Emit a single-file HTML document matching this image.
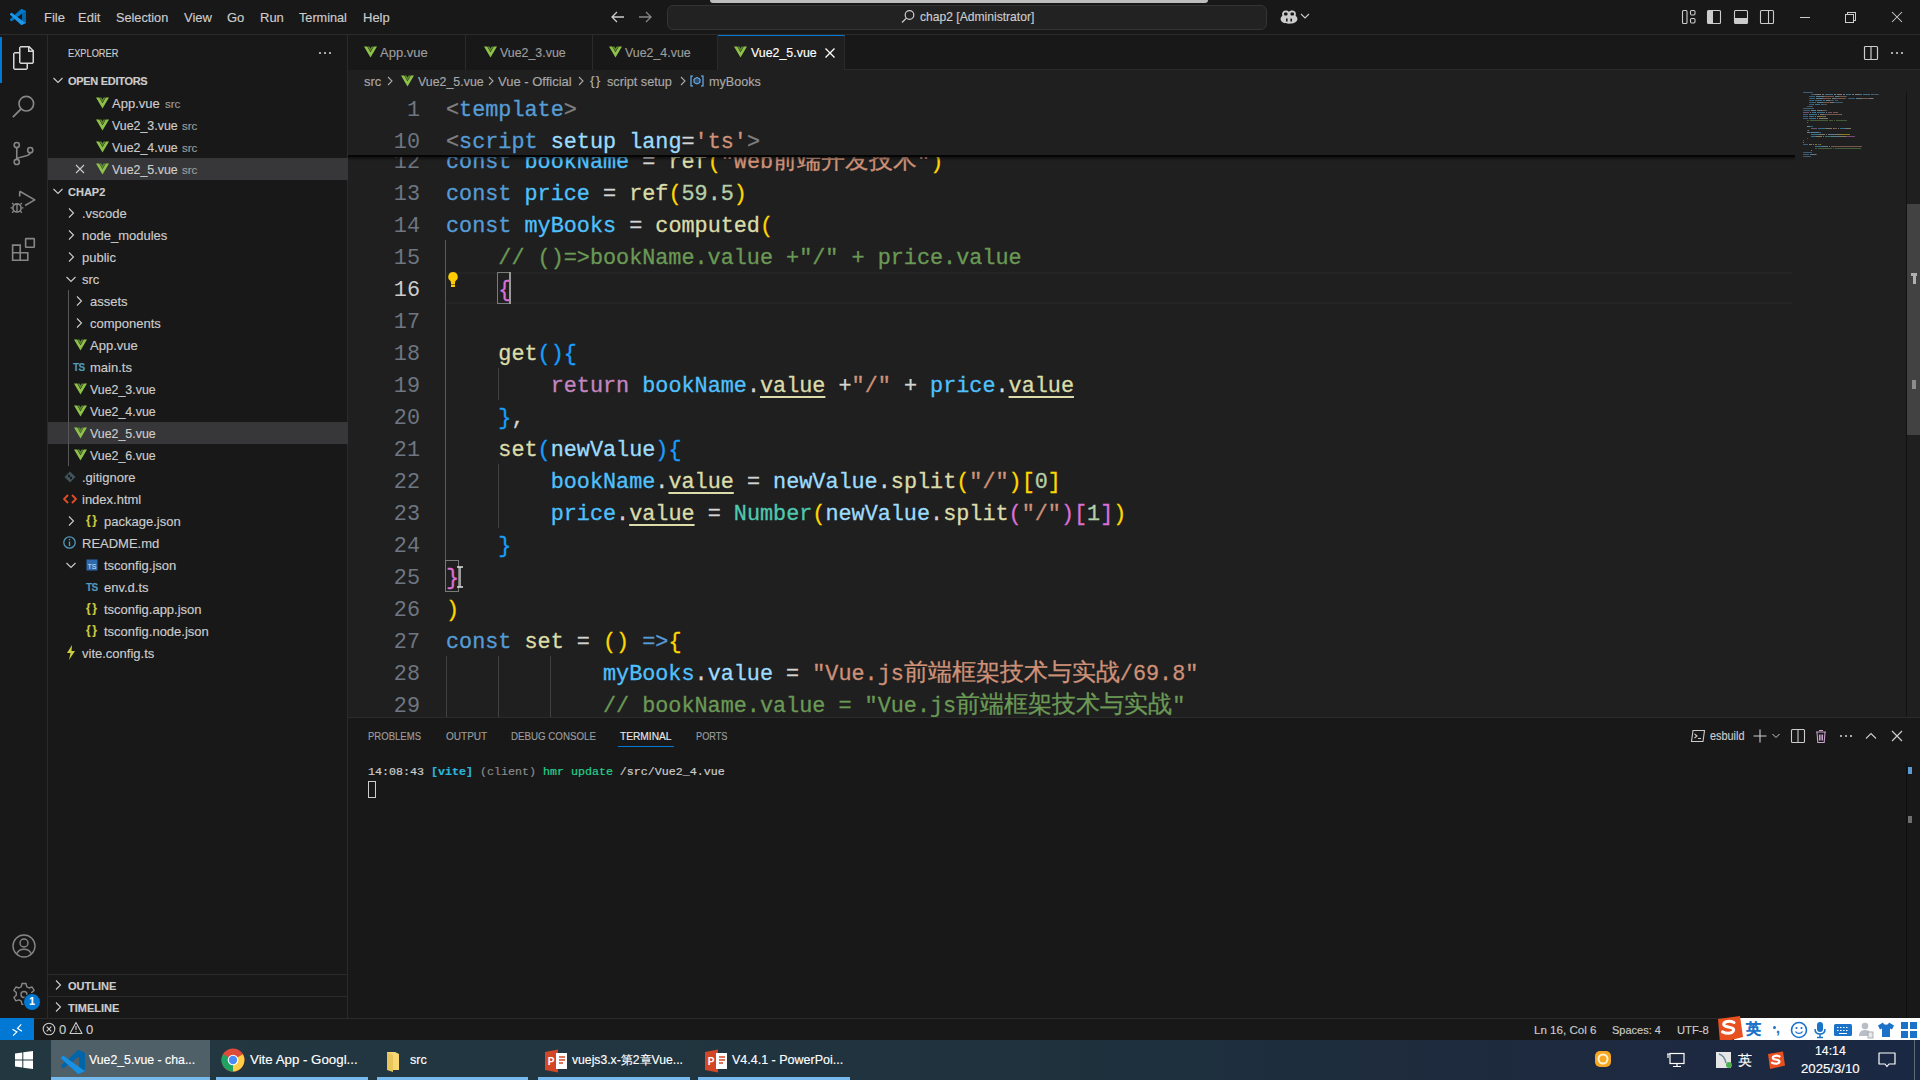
<!DOCTYPE html>
<html><head><meta charset="utf-8">
<style>
*{margin:0;padding:0;box-sizing:border-box}
html,body{width:1920px;height:1080px;overflow:hidden;background:#1f1f1f;font-family:"Liberation Sans",sans-serif;color:#cccccc}
.a{position:absolute}
.t{position:absolute;white-space:pre;font-size:13px;line-height:16px;-webkit-text-stroke:0.15px}
#title{left:0;top:0;width:1920px;height:35px;background:#181818;border-bottom:1px solid #2b2b2b}
#act{left:0;top:35px;width:48px;height:983px;background:#181818;border-right:1px solid #2b2b2b}
#side{left:48px;top:35px;width:300px;height:983px;background:#181818;border-right:1px solid #2b2b2b}
#tabs{left:348px;top:35px;width:1572px;height:35px;background:#181818;border-bottom:1px solid #2b2b2b}
#editor{left:348px;top:70px;width:1572px;height:647px;background:#1f1f1f;overflow:hidden}
#panel{left:348px;top:717px;width:1572px;height:301px;background:#181818;border-top:1px solid #2b2b2b}
#status{left:0;top:1018px;width:1920px;height:22px;background:#181818;border-top:1px solid #2b2b2b}
#taskbar{left:0;top:1040px;width:1920px;height:40px;background:linear-gradient(90deg,#223740 0%,#213640 30%,#1f313d 55%,#1d2a3e 78%,#1b2843 100%)}
.code{-webkit-text-stroke:0.3px;position:absolute;left:0;white-space:pre;font-family:"Liberation Mono",monospace;font-size:21.8px;line-height:38px;height:32px;color:#d4d4d4}
.ln{position:absolute;width:72px;text-align:right;font-family:"Liberation Mono",monospace;font-size:21.8px;line-height:38px;height:32px;color:#6e7681}
.k{color:#569cd6}.v{color:#4fc1ff}.p{color:#9cdcfe}.f{color:#dcdcaa}.n{color:#b5cea8}.s{color:#ce9178}.c{color:#6a9955}
.b1{color:#ffd700}.b2{color:#da70d6}.b3{color:#179fff}.r{color:#c586c0}.ty{color:#4ec9b0}.g{color:#808080}
.u{text-decoration:underline;text-decoration-thickness:2px;text-underline-offset:4px}
.cj{letter-spacing:0px;font-family:"Liberation Sans",sans-serif;font-size:23.8px;line-height:1px}
.row{position:absolute;left:0;width:300px;height:22px}
.row .t{top:4px}
</style></head><body>
<div id="title" class="a">
<svg class="a" style="left:10px;top:9px" width="16" height="16" viewBox="0 0 100 100"><path fill="#0065a9" d="M96.5 10.8L75.9 0.9c-2.4-1.2-5.3-0.7-7.1 1.2L29.4 38.1 12.2 25.1c-1.6-1.2-3.8-1.1-5.3 0.2L1.4 30.3c-1.8 1.7-1.8 4.5 0 6.2L16.3 50 1.4 63.5c-1.8 1.7-1.8 4.5 0 6.2l5.5 5c1.5 1.4 3.7 1.5 5.3 0.2l17.2-13L68.8 97.9c1.9 1.9 4.7 2.4 7.1 1.2l20.6-9.9c2.2-1 3.5-3.2 3.5-5.6V16.4c0-2.4-1.4-4.6-3.5-5.6zM75 72.7L45.1 50 75 27.3v45.4z"/><path fill="#007acc" d="M96.5 10.8L75.9 0.9c-2.4-1.2-5.3-0.7-7.1 1.2L1.4 63.5c-1.8 1.7-1.8 4.5 0 6.2l5.5 5c1.5 1.4 3.7 1.5 5.3 0.2L93 16.4c2.9-2.3 7 0 7 3.5v-3.5c0-2.400-1.4-4.6-3.5-5.6z" opacity=".9"/><path fill="#1f9cf0" d="M75.9 99.1c-2.4 1.2-5.3 0.7-7.1-1.2L1.4 36.5c-1.8-1.7-1.8-4.5 0-6.2l5.5-5c1.5-1.4 3.7-1.500 5.3-0.2L93 83.6c2.9 2.3 7 0.2 7-3.5v3.5c0 2.4-1.4 4.6-3.5 5.6z" opacity=".9"/></svg>
<div class="t" style="left:44px;top:10px">File</div>
<div class="t" style="left:78px;top:10px">Edit</div>
<div class="t" style="left:116px;top:10px;font-size:12.7px">Selection</div>
<div class="t" style="left:184px;top:10px">View</div>
<div class="t" style="left:227px;top:10px">Go</div>
<div class="t" style="left:260px;top:10px">Run</div>
<div class="t" style="left:299px;top:10px;font-size:12.7px">Terminal</div>
<div class="t" style="left:363px;top:10px">Help</div>
<svg class="a" style="left:609px;top:9px" width="18" height="16" viewBox="0 0 18 16"><path d="M15 8H3M8 3L3 8l5 5" stroke="#cccccc" stroke-width="1.3" fill="none"/></svg>
<svg class="a" style="left:636px;top:9px" width="18" height="16" viewBox="0 0 18 16"><path d="M3 8h12M10 3l5 5-5 5" stroke="#868686" stroke-width="1.3" fill="none"/></svg>
<div class="a" style="left:667px;top:5px;width:600px;height:25px;border-radius:6px;background:#222222;border:1px solid #343434"></div>
<div class="a" style="left:710px;top:0px;width:498px;height:3px;border-radius:0 0 4px 4px;background:#bdbdbd"></div>
<svg class="a" style="left:900px;top:9px" width="16" height="16" viewBox="0 0 16 16"><circle cx="9.5" cy="6" r="4.3" stroke="#cccccc" stroke-width="1.2" fill="none"/><path d="M6.4 9.1L2 13.5" stroke="#cccccc" stroke-width="1.3"/></svg>
<div class="t" style="left:920px;top:9px;font-size:12.1px">chap2 [Administrator]</div>
<svg class="a" style="left:1279px;top:9px" width="20" height="16" viewBox="0 0 20 16"><path d="M4 2.5c1.5-1.4 4.5-1.4 6 0.3 1.5-1.7 4.5-1.7 6-0.3 1 1 1 3 0.6 4.3 1.2 0.8 1.8 2 1.8 3.3 0 3-3.5 4.7-8.4 4.7S1.6 13.1 1.6 10.1c0-1.3 0.6-2.5 1.8-3.3C3 5.5 3 3.500 4 2.5z" fill="#cccccc"/><rect x="5" y="3.5" width="3.5" height="3" rx="1" fill="#181818"/><rect x="11.5" y="3.5" width="3.5" height="3" rx="1" fill="#181818"/><rect x="7" y="9.5" width="1.6" height="3" fill="#181818"/><rect x="11.4" y="9.5" width="1.6" height="3" fill="#181818"/></svg>
<svg class="a" style="left:1300px;top:12px" width="10" height="8" viewBox="0 0 10 8"><path d="M1 2l4 4 4-4" stroke="#cccccc" stroke-width="1.1" fill="none"/></svg>
<svg class="a" style="left:1681px;top:9px" width="16" height="16" viewBox="0 0 16 16"><rect x="1.5" y="1.5" width="4.5" height="13" rx="1" stroke="#cccccc" stroke-width="1.1" fill="none"/><rect x="9.5" y="1.5" width="4.5" height="4.5" rx="1.2" stroke="#cccccc" stroke-width="1.1" fill="none"/><rect x="9.5" y="9.5" width="4.5" height="4.5" rx="1.2" stroke="#cccccc" stroke-width="1.1" fill="none"/></svg>
<svg class="a" style="left:1706px;top:9px" width="16" height="16" viewBox="0 0 16 16"><rect x="1.5" y="1.5" width="13" height="13" rx="1" stroke="#cccccc" stroke-width="1.1" fill="none"/><rect x="2" y="2" width="5" height="12" fill="#cccccc"/></svg>
<svg class="a" style="left:1733px;top:9px" width="16" height="16" viewBox="0 0 16 16"><rect x="1.5" y="1.5" width="13" height="13" rx="1" stroke="#cccccc" stroke-width="1.1" fill="none"/><rect x="2" y="9" width="12" height="5" fill="#cccccc"/></svg>
<svg class="a" style="left:1759px;top:9px" width="16" height="16" viewBox="0 0 16 16"><rect x="1.5" y="1.5" width="13" height="13" rx="1" stroke="#cccccc" stroke-width="1.1" fill="none"/><path d="M9.5 2v12" stroke="#cccccc" stroke-width="1.1"/></svg>
<svg class="a" style="left:1797px;top:9px" width="16" height="16" viewBox="0 0 16 16" shape-rendering="crispEdges"><path d="M3 8.500h10" stroke="#cccccc" stroke-width="1"/></svg>
<svg class="a" style="left:1843px;top:9px" width="16" height="16" viewBox="0 0 16 16" shape-rendering="crispEdges"><rect x="2.5" y="5.5" width="8" height="8" stroke="#cccccc" stroke-width="1" fill="none"/><path d="M4.500 5.500V3.500h8v8h-2" stroke="#cccccc" stroke-width="1" fill="none"/></svg>
<svg class="a" style="left:1889px;top:9px" width="16" height="16" viewBox="0 0 16 16"><path d="M3 3l10 10M13 3L3 13" stroke="#d0d0d0" stroke-width="1.05"/></svg>
</div>
<div id="act" class="a">
<div class="a" style="left:0;top:2px;width:2px;height:46px;background:#0078d4"></div>
<svg class="a" style="left:12px;top:11px" width="24" height="24" viewBox="0 0 24 24"><path d="M17.5 0H8.5L7 1.5V6H2.5L1 7.5v15.07L2.5 24h12.07L16 22.57V18h4.700l1.300-1.430V4.500L17.5 0zm0 2.120l2.380 2.380H17.5V2.120zm-3 20.380h-12v-15H7v9.070L8.500 18h6v4.500zm6-6h-12v-15H16V6h4.500v10.500z" fill="#d7d7d7"/></svg>
<svg class="a" style="left:10px;top:58px" width="27" height="27" viewBox="0 0 24 24"><circle cx="14.5" cy="9.5" r="6.5" stroke="#868686" stroke-width="1.5" fill="none"/><path d="M10 14L2.5 21.5" stroke="#868686" stroke-width="1.6"/></svg>
<svg class="a" style="left:10px;top:105px" width="27" height="27" viewBox="0 0 24 24"><circle cx="6" cy="4.5" r="2.3" stroke="#868686" stroke-width="1.4" fill="none"/><circle cx="6" cy="19.5" r="2.3" stroke="#868686" stroke-width="1.4" fill="none"/><circle cx="18" cy="9" r="2.3" stroke="#868686" stroke-width="1.4" fill="none"/><path d="M6 7v10M18 11.3c0 4-12 3-12 5.9" stroke="#868686" stroke-width="1.4" fill="none"/></svg>
<svg class="a" style="left:10px;top:153px" width="28" height="28" viewBox="0 0 26 26"><path d="M9 3v5M9 3l14 8-9 5.200" stroke="#868686" stroke-width="1.5" fill="none" stroke-linejoin="round"/><circle cx="6.5" cy="18.5" r="3.8" stroke="#868686" stroke-width="1.5" fill="none"/><path d="M6.500 14.700v7.600M2 18.5h-1.500M12.5 18.5h-1.500M3.3 15.300L2 14M9.7 15.300L11 14M3.3 21.700L2 23M9.7 21.700L11 23" stroke="#868686" stroke-width="1.3"/></svg>
<svg class="a" style="left:11px;top:202px" width="26" height="26" viewBox="0 0 24 24"><path d="M1.5 7.5h7v7h7v7h-14zM8.5 14.5h-7M8.5 14.5v7" stroke="#868686" stroke-width="1.5" fill="none"/><rect x="13.5" y="1.5" width="8" height="8" rx="0.5" stroke="#868686" stroke-width="1.5" fill="none"/></svg>
<svg class="a" style="left:12px;top:899px" width="24" height="24" viewBox="0 0 24 24"><circle cx="12" cy="12" r="11" stroke="#868686" stroke-width="1.4" fill="none"/><circle cx="12" cy="9" r="4" stroke="#868686" stroke-width="1.4" fill="none"/><path d="M4.500 20c1.500-3.300 4-4.800 7.500-4.800s6 1.500 7.500 4.800" stroke="#868686" stroke-width="1.4" fill="none"/></svg>
<svg class="a" style="left:11px;top:947px" width="26" height="26" viewBox="0 0 26 26"><path d="M11 1.500h4l.7 3.200 2.300 1.300 3.100-1 2 3.400-2.400 2.200v2.700l2.400 2.200-2 3.400-3.100-1-2.300 1.300-.7 3.200h-4l-.7-3.200-2.300-1.300-3.100 1-2-3.400 2.400-2.200v-2.700L2.900 8.400l2-3.400 3.100 1 2.300-1.300z" stroke="#868686" stroke-width="1.4" fill="none" stroke-linejoin="round"/><circle cx="13" cy="12.500" r="3" stroke="#868686" stroke-width="1.4" fill="none"/></svg>
<div class="a" style="left:23px;top:958px;width:18px;height:18px;border-radius:9px;background:#0078d4;border:1.5px solid #181818"></div>
<div class="t" style="left:23px;top:959px;width:18px;text-align:center;font-size:10px;font-weight:bold;color:#fff">1</div>
</div>
<div id="side" class="a">
<div class="t" style="left:20px;top:10px;font-size:11px;transform-origin:0 0;transform:scaleX(0.84)">EXPLORER</div>
<svg class="a" style="left:269px;top:10px" width="16" height="16" viewBox="0 0 16 16"><circle cx="3" cy="8" r="1.1" fill="#cccccc"/><circle cx="8" cy="8" r="1.1" fill="#cccccc"/><circle cx="13" cy="8" r="1.1" fill="#cccccc"/></svg>
<div class="row" style="top:34px;"><svg class="a" style="left:4px;top:5px" width="12" height="12" viewBox="0 0 12 12"><path d="M1.5 4L6 8.500 10.500 4" stroke="#cccccc" stroke-width="1.1" fill="none"/></svg><div class="t" style="left:20px;color:#cccccc;font-size:11px;font-weight:bold;letter-spacing:-0.3px">OPEN EDITORS</div></div>
<div class="row" style="top:57px;"><svg class="a" style="left:48px;top:5px" width="13" height="12" viewBox="0 0 13 12"><path d="M0 0.5h3.2L6.5 6.2 9.8 0.5H13L6.5 11.5z" fill="#8dc149"/><path d="M3.6 0.5h1.8L6.5 2.5 7.6 0.5h1.8L6.5 5.6z" fill="#5f8a2e"/></svg><div class="t" style="left:64px;color:#cccccc;font-size:13px;">App.vue</div><div class="t" style="left:117px;color:#9d9d9d;font-size:11.5px;top:4px">src</div></div>
<div class="row" style="top:79px;"><svg class="a" style="left:48px;top:5px" width="13" height="12" viewBox="0 0 13 12"><path d="M0 0.5h3.2L6.5 6.2 9.8 0.5H13L6.5 11.5z" fill="#8dc149"/><path d="M3.6 0.5h1.8L6.5 2.5 7.6 0.5h1.8L6.5 5.6z" fill="#5f8a2e"/></svg><div class="t" style="left:64px;color:#cccccc;font-size:13px;font-size:12.4px">Vue2_3.vue</div><div class="t" style="left:134px;color:#9d9d9d;font-size:11.5px;top:4px">src</div></div>
<div class="row" style="top:101px;"><svg class="a" style="left:48px;top:5px" width="13" height="12" viewBox="0 0 13 12"><path d="M0 0.5h3.2L6.5 6.2 9.8 0.5H13L6.5 11.5z" fill="#8dc149"/><path d="M3.6 0.5h1.8L6.5 2.5 7.6 0.5h1.8L6.5 5.6z" fill="#5f8a2e"/></svg><div class="t" style="left:64px;color:#cccccc;font-size:13px;font-size:12.4px">Vue2_4.vue</div><div class="t" style="left:134px;color:#9d9d9d;font-size:11.5px;top:4px">src</div></div>
<div class="row" style="top:123px;background:#37373a;"><svg class="a" style="left:48px;top:5px" width="13" height="12" viewBox="0 0 13 12"><path d="M0 0.5h3.2L6.5 6.2 9.8 0.5H13L6.5 11.5z" fill="#8dc149"/><path d="M3.6 0.5h1.8L6.5 2.5 7.6 0.5h1.8L6.5 5.6z" fill="#5f8a2e"/></svg><svg class="a" style="left:26px;top:5px" width="12" height="12" viewBox="0 0 12 12"><path d="M2 2l8 8M10 2L2 10" stroke="#cccccc" stroke-width="1.1"/></svg><div class="t" style="left:64px;color:#cccccc;font-size:13px;font-size:12.4px">Vue2_5.vue</div><div class="t" style="left:134px;color:#9d9d9d;font-size:11.5px;top:4px">src</div></div>
<div class="row" style="top:145px;"><svg class="a" style="left:4px;top:5px" width="12" height="12" viewBox="0 0 12 12"><path d="M1.5 4L6 8.500 10.500 4" stroke="#cccccc" stroke-width="1.1" fill="none"/></svg><div class="t" style="left:20px;color:#cccccc;font-size:11px;font-weight:bold;">CHAP2</div></div>
<div class="row" style="top:167px;"><svg class="a" style="left:17px;top:5px" width="12" height="12" viewBox="0 0 12 12"><path d="M4 1.5L8.500 6 4 10.500" stroke="#cccccc" stroke-width="1.1" fill="none"/></svg><div class="t" style="left:34px;color:#cccccc;font-size:13px;">.vscode</div></div>
<div class="row" style="top:189px;"><svg class="a" style="left:17px;top:5px" width="12" height="12" viewBox="0 0 12 12"><path d="M4 1.5L8.500 6 4 10.500" stroke="#cccccc" stroke-width="1.1" fill="none"/></svg><div class="t" style="left:34px;color:#cccccc;font-size:13px;">node_modules</div></div>
<div class="row" style="top:211px;"><svg class="a" style="left:17px;top:5px" width="12" height="12" viewBox="0 0 12 12"><path d="M4 1.5L8.500 6 4 10.500" stroke="#cccccc" stroke-width="1.1" fill="none"/></svg><div class="t" style="left:34px;color:#cccccc;font-size:13px;">public</div></div>
<div class="row" style="top:233px;"><svg class="a" style="left:17px;top:5px" width="12" height="12" viewBox="0 0 12 12"><path d="M1.5 4L6 8.500 10.500 4" stroke="#cccccc" stroke-width="1.1" fill="none"/></svg><div class="t" style="left:34px;color:#cccccc;font-size:13px;">src</div></div>
<div class="row" style="top:255px;"><svg class="a" style="left:25px;top:5px" width="12" height="12" viewBox="0 0 12 12"><path d="M4 1.5L8.500 6 4 10.500" stroke="#cccccc" stroke-width="1.1" fill="none"/></svg><div class="t" style="left:42px;color:#cccccc;font-size:13px;">assets</div></div>
<div class="row" style="top:277px;"><svg class="a" style="left:25px;top:5px" width="12" height="12" viewBox="0 0 12 12"><path d="M4 1.5L8.500 6 4 10.500" stroke="#cccccc" stroke-width="1.1" fill="none"/></svg><div class="t" style="left:42px;color:#cccccc;font-size:13px;">components</div></div>
<div class="row" style="top:299px;"><svg class="a" style="left:26px;top:5px" width="13" height="12" viewBox="0 0 13 12"><path d="M0 0.5h3.2L6.5 6.2 9.8 0.5H13L6.5 11.5z" fill="#8dc149"/><path d="M3.6 0.5h1.8L6.5 2.5 7.6 0.5h1.8L6.5 5.6z" fill="#5f8a2e"/></svg><div class="t" style="left:42px;color:#cccccc;font-size:13px;">App.vue</div></div>
<div class="row" style="top:321px;"><div class="t" style="left:25px;top:4px;font-size:10px;font-weight:bold;color:#519aba;letter-spacing:-0.5px">TS</div><div class="t" style="left:42px;color:#cccccc;font-size:13px;">main.ts</div></div>
<div class="row" style="top:343px;"><svg class="a" style="left:26px;top:5px" width="13" height="12" viewBox="0 0 13 12"><path d="M0 0.5h3.2L6.5 6.2 9.8 0.5H13L6.5 11.5z" fill="#8dc149"/><path d="M3.6 0.5h1.8L6.5 2.5 7.6 0.5h1.8L6.5 5.6z" fill="#5f8a2e"/></svg><div class="t" style="left:42px;color:#cccccc;font-size:13px;font-size:12.4px">Vue2_3.vue</div></div>
<div class="row" style="top:365px;"><svg class="a" style="left:26px;top:5px" width="13" height="12" viewBox="0 0 13 12"><path d="M0 0.5h3.2L6.5 6.2 9.8 0.5H13L6.5 11.5z" fill="#8dc149"/><path d="M3.6 0.5h1.8L6.5 2.5 7.6 0.5h1.8L6.5 5.6z" fill="#5f8a2e"/></svg><div class="t" style="left:42px;color:#cccccc;font-size:13px;font-size:12.4px">Vue2_4.vue</div></div>
<div class="row" style="top:387px;background:#37373a;"><svg class="a" style="left:26px;top:5px" width="13" height="12" viewBox="0 0 13 12"><path d="M0 0.5h3.2L6.5 6.2 9.8 0.5H13L6.5 11.5z" fill="#8dc149"/><path d="M3.6 0.5h1.8L6.5 2.5 7.6 0.5h1.8L6.5 5.6z" fill="#5f8a2e"/></svg><div class="t" style="left:42px;color:#cccccc;font-size:13px;font-size:12.4px">Vue2_5.vue</div></div>
<div class="row" style="top:409px;"><svg class="a" style="left:26px;top:5px" width="13" height="12" viewBox="0 0 13 12"><path d="M0 0.5h3.2L6.5 6.2 9.8 0.5H13L6.5 11.5z" fill="#8dc149"/><path d="M3.6 0.5h1.8L6.5 2.5 7.6 0.5h1.8L6.5 5.6z" fill="#5f8a2e"/></svg><div class="t" style="left:42px;color:#cccccc;font-size:13px;font-size:12.4px">Vue2_6.vue</div></div>
<div class="row" style="top:431px;"><svg class="a" style="left:16px;top:5px" width="12" height="12" viewBox="0 0 12 12"><path d="M6 0.500L11.500 6 6 11.500 0.500 6z" fill="#41535b"/><circle cx="5" cy="5" r="1.200" fill="#181818"/><circle cx="7" cy="7" r="1.200" fill="#181818"/></svg><div class="t" style="left:34px;color:#cccccc;font-size:13px;">.gitignore</div></div>
<div class="row" style="top:453px;"><svg class="a" style="left:15px;top:5px" width="14" height="12" viewBox="0 0 14 12"><path d="M5 2L1 6l4 4M9 2l4 4-4 4" stroke="#e44d26" stroke-width="1.8" fill="none"/></svg><div class="t" style="left:34px;color:#cccccc;font-size:13px;">index.html</div></div>
<div class="row" style="top:475px;"><svg class="a" style="left:17px;top:5px" width="12" height="12" viewBox="0 0 12 12"><path d="M4 1.5L8.500 6 4 10.500" stroke="#cccccc" stroke-width="1.1" fill="none"/></svg><div class="t" style="left:38px;top:2px;font-size:12px;font-weight:bold;color:#cbcb41;letter-spacing:1.5px">{}</div><div class="t" style="left:56px;color:#cccccc;font-size:13px;">package.json</div></div>
<div class="row" style="top:497px;"><svg class="a" style="left:15px;top:4px" width="13" height="13" viewBox="0 0 13 13"><circle cx="6.500" cy="6.500" r="5.700" stroke="#519aba" stroke-width="1.300" fill="none"/><path d="M6.500 5.500v4.500M6.500 3v1.300" stroke="#519aba" stroke-width="1.400"/></svg><div class="t" style="left:34px;color:#cccccc;font-size:13px;">README.md</div></div>
<div class="row" style="top:519px;"><svg class="a" style="left:17px;top:5px" width="12" height="12" viewBox="0 0 12 12"><path d="M1.5 4L6 8.500 10.500 4" stroke="#cccccc" stroke-width="1.1" fill="none"/></svg><svg class="a" style="left:38px;top:5px" width="12" height="12" viewBox="0 0 12 12"><rect x="0.500" y="0.500" width="11" height="11" fill="#3178c6" opacity="0.85"/><text x="6" y="10" font-size="7" font-family="Liberation Sans" fill="#cfe3f5" text-anchor="middle">TS</text></svg><div class="t" style="left:56px;color:#cccccc;font-size:13px;">tsconfig.json</div></div>
<div class="row" style="top:541px;"><div class="t" style="left:38px;top:4px;font-size:10px;font-weight:bold;color:#519aba;letter-spacing:-0.5px">TS</div><div class="t" style="left:56px;color:#cccccc;font-size:13px;">env.d.ts</div></div>
<div class="row" style="top:563px;"><div class="t" style="left:38px;top:2px;font-size:12px;font-weight:bold;color:#cbcb41;letter-spacing:1.5px">{}</div><div class="t" style="left:56px;color:#cccccc;font-size:13px;">tsconfig.app.json</div></div>
<div class="row" style="top:585px;"><div class="t" style="left:38px;top:2px;font-size:12px;font-weight:bold;color:#cbcb41;letter-spacing:1.5px">{}</div><div class="t" style="left:56px;color:#cccccc;font-size:13px;">tsconfig.node.json</div></div>
<div class="row" style="top:607px;"><svg class="a" style="left:18px;top:3px" width="10" height="15" viewBox="0 0 10 15"><path d="M6 0L1 8h3.500L3 15l6-9H5.500z" fill="#cbcb41"/></svg><div class="t" style="left:34px;color:#cccccc;font-size:13px;">vite.config.ts</div></div>
<div class="a" style="left:20px;top:255px;width:1px;height:176px;background:#585858"></div>
<div class="a" style="left:0;top:939px;width:299px;height:1px;background:#2b2b2b"></div>
<div class="a" style="left:0;top:961px;width:299px;height:1px;background:#2b2b2b"></div>
<div class="row" style="top:939px;"><svg class="a" style="left:4px;top:5px" width="12" height="12" viewBox="0 0 12 12"><path d="M4 1.5L8.500 6 4 10.500" stroke="#cccccc" stroke-width="1.1" fill="none"/></svg><div class="t" style="left:20px;color:#cccccc;font-size:11px;font-weight:bold;">OUTLINE</div></div>
<div class="row" style="top:961px;"><svg class="a" style="left:4px;top:5px" width="12" height="12" viewBox="0 0 12 12"><path d="M4 1.5L8.500 6 4 10.500" stroke="#cccccc" stroke-width="1.1" fill="none"/></svg><div class="t" style="left:20px;color:#cccccc;font-size:11px;font-weight:bold;">TIMELINE</div></div>
</div>
<div id="tabs" class="a">
<div class="a" style="left:0px;top:0;width:118px;height:35px;background:#181818;border-right:1px solid #2b2b2b;"></div>
<svg class="a" style="left:16px;top:11px" width="13" height="12" viewBox="0 0 13 12"><path d="M0 0.5h3.2L6.5 6.2 9.8 0.5H13L6.5 11.5z" fill="#8dc149"/><path d="M3.6 0.5h1.8L6.5 2.5 7.6 0.5h1.8L6.5 5.6z" fill="#5f8a2e"/></svg>
<div class="t" style="left:32px;top:10px;color:#9d9d9d;font-size:13px">App.vue</div>
<div class="a" style="left:118px;top:0;width:127px;height:35px;background:#181818;border-right:1px solid #2b2b2b;"></div>
<svg class="a" style="left:136px;top:11px" width="13" height="12" viewBox="0 0 13 12"><path d="M0 0.5h3.2L6.5 6.2 9.8 0.5H13L6.5 11.5z" fill="#8dc149"/><path d="M3.6 0.5h1.8L6.5 2.5 7.6 0.5h1.8L6.5 5.6z" fill="#5f8a2e"/></svg>
<div class="t" style="left:152px;top:10px;color:#9d9d9d;font-size:12.4px">Vue2_3.vue</div>
<div class="a" style="left:245px;top:0;width:125px;height:35px;background:#181818;border-right:1px solid #2b2b2b;"></div>
<svg class="a" style="left:261px;top:11px" width="13" height="12" viewBox="0 0 13 12"><path d="M0 0.5h3.2L6.5 6.2 9.8 0.5H13L6.5 11.5z" fill="#8dc149"/><path d="M3.6 0.5h1.8L6.5 2.5 7.6 0.5h1.8L6.5 5.6z" fill="#5f8a2e"/></svg>
<div class="t" style="left:277px;top:10px;color:#9d9d9d;font-size:12.4px">Vue2_4.vue</div>
<div class="a" style="left:370px;top:0;width:127px;height:35px;background:#1f1f1f;border-right:1px solid #2b2b2b;border-top:1px solid #0078d4;height:36px"></div>
<svg class="a" style="left:386px;top:11px" width="13" height="12" viewBox="0 0 13 12"><path d="M0 0.5h3.2L6.5 6.2 9.8 0.5H13L6.5 11.5z" fill="#8dc149"/><path d="M3.6 0.5h1.8L6.5 2.5 7.6 0.5h1.8L6.5 5.6z" fill="#5f8a2e"/></svg>
<div class="t" style="left:403px;top:10px;color:#ffffff;font-size:12.4px">Vue2_5.vue</div>
<svg class="a" style="left:475px;top:11px" width="14" height="14" viewBox="0 0 14 14"><path d="M2.5 2.5l9 9M11.5 2.5l-9 9" stroke="#ffffff" stroke-width="1.3"/></svg>
<svg class="a" style="left:1515px;top:10px" width="16" height="16" viewBox="0 0 16 16"><rect x="1.5" y="1.5" width="13" height="13" rx="1" stroke="#cccccc" stroke-width="1.2" fill="none"/><path d="M8 2v12" stroke="#cccccc" stroke-width="1.2"/></svg>
<svg class="a" style="left:1541px;top:10px" width="16" height="16" viewBox="0 0 16 16"><circle cx="3" cy="8" r="1.1" fill="#cccccc"/><circle cx="8" cy="8" r="1.1" fill="#cccccc"/><circle cx="13" cy="8" r="1.1" fill="#cccccc"/></svg>
</div>
<div id="editor" class="a">
<div class="t" style="left:16px;top:4px;color:#a9a9a9;">src</div>
<svg class="a" style="left:37px;top:5px" width="10" height="12" viewBox="0 0 10 12"><path d="M3 2l4 4-4 4" stroke="#a9a9a9" stroke-width="1.1" fill="none"/></svg>
<svg class="a" style="left:53px;top:5px" width="13" height="12" viewBox="0 0 13 12"><path d="M0 0.5h3.2L6.5 6.2 9.8 0.5H13L6.5 11.5z" fill="#8dc149"/><path d="M3.6 0.5h1.8L6.5 2.5 7.6 0.5h1.8L6.5 5.6z" fill="#5f8a2e"/></svg>
<div class="t" style="left:70px;top:4px;color:#a9a9a9;font-size:12.4px">Vue2_5.vue</div>
<svg class="a" style="left:138px;top:5px" width="10" height="12" viewBox="0 0 10 12"><path d="M3 2l4 4-4 4" stroke="#a9a9a9" stroke-width="1.1" fill="none"/></svg>
<div class="t" style="left:150px;top:4px;color:#a9a9a9;">Vue - Official</div>
<svg class="a" style="left:228px;top:5px" width="10" height="12" viewBox="0 0 10 12"><path d="M3 2l4 4-4 4" stroke="#a9a9a9" stroke-width="1.1" fill="none"/></svg>
<div class="t" style="left:242px;top:3px;color:#b0b0b0;font-size:13.5px;letter-spacing:1.2px">{}</div>
<div class="t" style="left:259px;top:4px;color:#a9a9a9;font-size:12.7px">script setup</div>
<svg class="a" style="left:330px;top:5px" width="10" height="12" viewBox="0 0 10 12"><path d="M3 2l4 4-4 4" stroke="#a9a9a9" stroke-width="1.1" fill="none"/></svg>
<svg class="a" style="left:342px;top:5px" width="14" height="12" viewBox="0 0 14 12"><path d="M3 1H1v10h2M11 1h2v10h-2" stroke="#75beff" stroke-width="1.1" fill="none"/><path d="M7 2.5l3 1.5v3.500L7 9 4 7.500V4z" stroke="#75beff" stroke-width="1" fill="#2d4a66"/></svg>
<div class="t" style="left:361px;top:4px;color:#a9a9a9;font-size:12.6px">myBooks</div>
<div class="a" style="left:98px;top:202px;width:1346px;height:32px;border-top:2px solid #242424;border-bottom:2px solid #242424"></div>
<div class="a" style="left:97px;top:170px;width:1px;height:320px;background:#5a5a5a"></div>
<div class="a" style="left:150px;top:298px;width:1px;height:32px;background:#404040"></div>
<div class="a" style="left:150px;top:394px;width:1px;height:64px;background:#404040"></div>
<div class="a" style="left:98px;top:586px;width:1px;height:64px;background:#404040"></div>
<div class="a" style="left:150px;top:586px;width:1px;height:64px;background:#404040"></div>
<div class="a" style="left:202px;top:586px;width:1px;height:64px;background:#404040"></div>
<div class="ln" style="left:0;top:74px;color:#6e7681">12</div><div class="code" style="left:98px;top:74px"><span class="k">const</span> <span class="v">bookName</span> = <span class="f">ref</span><span class="b1">(</span><span class="s">"Web<span class="cj">前端开发技术</span>"</span><span class="b1">)</span></div>
<div class="ln" style="left:0;top:106px;color:#6e7681">13</div><div class="code" style="left:98px;top:106px"><span class="k">const</span> <span class="v">price</span> = <span class="f">ref</span><span class="b1">(</span><span class="n">59.5</span><span class="b1">)</span></div>
<div class="ln" style="left:0;top:138px;color:#6e7681">14</div><div class="code" style="left:98px;top:138px"><span class="k">const</span> <span class="v">myBooks</span> = <span class="f">computed</span><span class="b1">(</span></div>
<div class="ln" style="left:0;top:170px;color:#6e7681">15</div><div class="code" style="left:98px;top:170px">    <span class="c">// ()=&gt;bookName.value +"/" + price.value</span></div>
<div class="ln" style="left:0;top:202px;color:#cccccc">16</div><div class="code" style="left:98px;top:202px">    <span class="b2">{</span></div>
<div class="ln" style="left:0;top:234px;color:#6e7681">17</div><div class="code" style="left:98px;top:234px"></div>
<div class="ln" style="left:0;top:266px;color:#6e7681">18</div><div class="code" style="left:98px;top:266px">    <span class="f">get</span><span class="b3">()</span><span class="b3">{</span></div>
<div class="ln" style="left:0;top:298px;color:#6e7681">19</div><div class="code" style="left:98px;top:298px">        <span class="r">return</span> <span class="v">bookName</span>.<span class="f u">value</span> +<span class="s">"/"</span> + <span class="v">price</span>.<span class="f u">value</span></div>
<div class="ln" style="left:0;top:330px;color:#6e7681">20</div><div class="code" style="left:98px;top:330px">    <span class="b3">}</span>,</div>
<div class="ln" style="left:0;top:362px;color:#6e7681">21</div><div class="code" style="left:98px;top:362px">    <span class="f">set</span><span class="b3">(</span><span class="p">newValue</span><span class="b3">){</span></div>
<div class="ln" style="left:0;top:394px;color:#6e7681">22</div><div class="code" style="left:98px;top:394px">        <span class="v">bookName</span>.<span class="f u">value</span> = <span class="p">newValue</span>.<span class="f">split</span><span class="b1">(</span><span class="s">"/"</span><span class="b1">)[</span><span class="n">0</span><span class="b1">]</span></div>
<div class="ln" style="left:0;top:426px;color:#6e7681">23</div><div class="code" style="left:98px;top:426px">        <span class="v">price</span>.<span class="f u">value</span> = <span class="ty">Number</span><span class="b1">(</span><span class="p">newValue</span>.<span class="f">split</span><span class="b2">(</span><span class="s">"/"</span><span class="b2">)[</span><span class="n">1</span><span class="b2">]</span><span class="b1">)</span></div>
<div class="ln" style="left:0;top:458px;color:#6e7681">24</div><div class="code" style="left:98px;top:458px">    <span class="b3">}</span></div>
<div class="ln" style="left:0;top:490px;color:#6e7681">25</div><div class="code" style="left:98px;top:490px"><span class="b2">}</span></div>
<div class="ln" style="left:0;top:522px;color:#6e7681">26</div><div class="code" style="left:98px;top:522px"><span class="b1">)</span></div>
<div class="ln" style="left:0;top:554px;color:#6e7681">27</div><div class="code" style="left:98px;top:554px"><span class="k">const</span> <span class="f">set</span> = <span class="b1">()</span> <span class="k">=&gt;</span><span class="b1">{</span></div>
<div class="ln" style="left:0;top:586px;color:#6e7681">28</div><div class="code" style="left:98px;top:586px">            <span class="v">myBooks</span>.<span class="p">value</span> = <span class="s">"Vue.js<span class="cj">前端框架技术与实战</span>/69.8"</span></div>
<div class="ln" style="left:0;top:618px;color:#6e7681">29</div><div class="code" style="left:98px;top:618px">            <span class="c">// bookName.value = "Vue.js<span class="cj">前端框架技术与实战</span>"</span></div>
<div class="a" style="left:149px;top:202px;width:14px;height:32px;border:1px solid #7a7a7a"></div>
<div class="a" style="left:97px;top:490px;width:14px;height:32px;border:1px solid #7a7a7a"></div>
<div class="a" style="left:161px;top:202px;width:2px;height:32px;background:#9a9a9a"></div>
<svg class="a" style="left:107px;top:496px" width="10" height="22" viewBox="0 0 10 22"><path d="M2 1h6M5 1v20M2 21h6" stroke="#e0e0e0" stroke-width="1.3"/></svg>
<svg class="a" style="left:99px;top:201px" width="12" height="18" viewBox="0 0 12 18"><path d="M6 1a4.800 4.800 0 0 0-3 8.500c.700.700 1 1.300 1 2.200V13h4v-1.300c0-.900.300-1.500 1-2.200A4.800 4.800 0 0 0 6 1z" fill="#ffcc00"/><rect x="4" y="13.500" width="4" height="2.500" fill="#ffcc00"/></svg>
<div class="a" style="left:0;top:22px;width:1447px;height:64px;background:#1f1f1f"></div>
<div class="a" style="left:0;top:85px;width:1447px;height:2px;background:#050505"></div><div class="a" style="left:0;top:87px;width:1447px;height:4px;background:linear-gradient(rgba(0,0,0,.45),rgba(0,0,0,0))"></div>
<div class="ln" style="left:0;top:22px;color:#6e7681">1</div><div class="code" style="left:98px;top:22px"><span class="g">&lt;</span><span class="k">template</span><span class="g">&gt;</span></div>
<div class="ln" style="left:0;top:54px;color:#6e7681">10</div><div class="code" style="left:98px;top:54px"><span class="g">&lt;</span><span class="k">script</span> <span class="p">setup</span> <span class="p">lang</span>=<span class="s">'ts'</span><span class="g">&gt;</span></div>
<div class="a" style="left:1455px;top:22px;width:100px;height:70px"><div class="a" style="left:0px;top:0px;width:1px;height:1px;background:#808080;opacity:.5"></div><div class="a" style="left:1px;top:0px;width:8px;height:1px;background:#569cd6;opacity:.5"></div><div class="a" style="left:9px;top:0px;width:1px;height:1px;background:#808080;opacity:.5"></div><div class="a" style="left:8px;top:2px;width:1px;height:1px;background:#808080;opacity:.5"></div><div class="a" style="left:9px;top:2px;width:3px;height:1px;background:#569cd6;opacity:.5"></div><div class="a" style="left:12px;top:2px;width:1px;height:1px;background:#d4d4d4;opacity:.5"></div><div class="a" style="left:13px;top:2px;width:5px;height:1px;background:#d4d4d4;opacity:.5"></div><div class="a" style="left:19px;top:2px;width:2px;height:1px;background:#d4d4d4;opacity:.5"></div><div class="a" style="left:22px;top:2px;width:8px;height:1px;background:#4fc1ff;opacity:.5"></div><div class="a" style="left:31px;top:2px;width:2px;height:1px;background:#d4d4d4;opacity:.5"></div><div class="a" style="left:34px;top:2px;width:5px;height:1px;background:#d4d4d4;opacity:.5"></div><div class="a" style="left:40px;top:2px;width:2px;height:1px;background:#d4d4d4;opacity:.5"></div><div class="a" style="left:43px;top:2px;width:5px;height:1px;background:#4fc1ff;opacity:.5"></div><div class="a" style="left:49px;top:2px;width:2px;height:1px;background:#d4d4d4;opacity:.5"></div><div class="a" style="left:52px;top:2px;width:5px;height:1px;background:#d4d4d4;opacity:.5"></div><div class="a" style="left:57px;top:2px;width:2px;height:1px;background:#4fc1ff;opacity:.5"></div><div class="a" style="left:60px;top:2px;width:7px;height:1px;background:#4fc1ff;opacity:.5"></div><div class="a" style="left:68px;top:2px;width:2px;height:1px;background:#4fc1ff;opacity:.5"></div><div class="a" style="left:70px;top:2px;width:2px;height:1px;background:#808080;opacity:.5"></div><div class="a" style="left:72px;top:2px;width:3px;height:1px;background:#569cd6;opacity:.5"></div><div class="a" style="left:75px;top:2px;width:1px;height:1px;background:#808080;opacity:.5"></div><div class="a" style="left:6px;top:4px;width:1px;height:1px;background:#808080;opacity:.5"></div><div class="a" style="left:7px;top:4px;width:5px;height:1px;background:#569cd6;opacity:.5"></div><div class="a" style="left:13px;top:4px;width:7px;height:1px;background:#9cdcfe;opacity:.5"></div><div class="a" style="left:20px;top:4px;width:1px;height:1px;background:#d4d4d4;opacity:.5"></div><div class="a" style="left:21px;top:4px;width:10px;height:1px;background:#ce9178;opacity:.5"></div><div class="a" style="left:32px;top:4px;width:4px;height:1px;background:#9cdcfe;opacity:.5"></div><div class="a" style="left:36px;top:4px;width:7px;height:1px;background:#ce9178;opacity:.5"></div><div class="a" style="left:43px;top:4px;width:1px;height:1px;background:#808080;opacity:.5"></div><div class="a" style="left:6px;top:6px;width:1px;height:1px;background:#808080;opacity:.5"></div><div class="a" style="left:7px;top:6px;width:5px;height:1px;background:#569cd6;opacity:.5"></div><div class="a" style="left:13px;top:6px;width:7px;height:1px;background:#9cdcfe;opacity:.5"></div><div class="a" style="left:20px;top:6px;width:8px;height:1px;background:#ce9178;opacity:.5"></div><div class="a" style="left:29px;top:6px;width:4px;height:1px;background:#9cdcfe;opacity:.5"></div><div class="a" style="left:33px;top:6px;width:9px;height:1px;background:#ce9178;opacity:.5"></div><div class="a" style="left:42px;top:6px;width:1px;height:1px;background:#808080;opacity:.5"></div><div class="a" style="left:45px;top:6px;width:1px;height:1px;background:#808080;opacity:.5"></div><div class="a" style="left:46px;top:6px;width:6px;height:1px;background:#569cd6;opacity:.5"></div><div class="a" style="left:53px;top:6px;width:6px;height:1px;background:#9cdcfe;opacity:.5"></div><div class="a" style="left:59px;top:6px;width:6px;height:1px;background:#ce9178;opacity:.5"></div><div class="a" style="left:65px;top:6px;width:1px;height:1px;background:#808080;opacity:.5"></div><div class="a" style="left:66px;top:6px;width:4px;height:1px;background:#d4d4d4;opacity:.5"></div><div class="a" style="left:70px;top:6px;width:1px;height:1px;background:#808080;opacity:.5"></div><div class="a" style="left:6px;top:8px;width:1px;height:1px;background:#808080;opacity:.5"></div><div class="a" style="left:7px;top:8px;width:1px;height:1px;background:#569cd6;opacity:.5"></div><div class="a" style="left:8px;top:8px;width:1px;height:1px;background:#808080;opacity:.5"></div><div class="a" style="left:9px;top:8px;width:2px;height:1px;background:#4fc1ff;opacity:.5"></div><div class="a" style="left:12px;top:8px;width:7px;height:1px;background:#4fc1ff;opacity:.5"></div><div class="a" style="left:20px;top:8px;width:2px;height:1px;background:#4fc1ff;opacity:.5"></div><div class="a" style="left:23px;top:8px;width:4px;height:1px;background:#d4d4d4;opacity:.5"></div><div class="a" style="left:27px;top:8px;width:2px;height:1px;background:#808080;opacity:.5"></div><div class="a" style="left:29px;top:8px;width:1px;height:1px;background:#569cd6;opacity:.5"></div><div class="a" style="left:30px;top:8px;width:1px;height:1px;background:#808080;opacity:.5"></div><div class="a" style="left:32px;top:8px;width:1px;height:1px;background:#808080;opacity:.5"></div><div class="a" style="left:33px;top:8px;width:1px;height:1px;background:#569cd6;opacity:.5"></div><div class="a" style="left:34px;top:8px;width:1px;height:1px;background:#808080;opacity:.5"></div><div class="a" style="left:6px;top:10px;width:1px;height:1px;background:#808080;opacity:.5"></div><div class="a" style="left:7px;top:10px;width:6px;height:1px;background:#569cd6;opacity:.5"></div><div class="a" style="left:14px;top:10px;width:6px;height:1px;background:#9cdcfe;opacity:.5"></div><div class="a" style="left:20px;top:10px;width:6px;height:1px;background:#ce9178;opacity:.5"></div><div class="a" style="left:26px;top:10px;width:1px;height:1px;background:#808080;opacity:.5"></div><div class="a" style="left:27px;top:10px;width:4px;height:1px;background:#d4d4d4;opacity:.5"></div><div class="a" style="left:31px;top:10px;width:2px;height:1px;background:#808080;opacity:.5"></div><div class="a" style="left:33px;top:10px;width:6px;height:1px;background:#569cd6;opacity:.5"></div><div class="a" style="left:39px;top:10px;width:1px;height:1px;background:#808080;opacity:.5"></div><div class="a" style="left:6px;top:12px;width:1px;height:1px;background:#808080;opacity:.5"></div><div class="a" style="left:7px;top:12px;width:1px;height:1px;background:#569cd6;opacity:.5"></div><div class="a" style="left:8px;top:12px;width:1px;height:1px;background:#808080;opacity:.5"></div><div class="a" style="left:9px;top:12px;width:2px;height:1px;background:#4fc1ff;opacity:.5"></div><div class="a" style="left:12px;top:12px;width:5px;height:1px;background:#4fc1ff;opacity:.5"></div><div class="a" style="left:18px;top:12px;width:2px;height:1px;background:#4fc1ff;opacity:.5"></div><div class="a" style="left:20px;top:12px;width:2px;height:1px;background:#808080;opacity:.5"></div><div class="a" style="left:22px;top:12px;width:1px;height:1px;background:#569cd6;opacity:.5"></div><div class="a" style="left:23px;top:12px;width:1px;height:1px;background:#808080;opacity:.5"></div><div class="a" style="left:4px;top:14px;width:2px;height:1px;background:#808080;opacity:.5"></div><div class="a" style="left:6px;top:14px;width:3px;height:1px;background:#569cd6;opacity:.5"></div><div class="a" style="left:9px;top:14px;width:1px;height:1px;background:#808080;opacity:.5"></div><div class="a" style="left:0px;top:16px;width:2px;height:1px;background:#808080;opacity:.5"></div><div class="a" style="left:2px;top:16px;width:8px;height:1px;background:#569cd6;opacity:.5"></div><div class="a" style="left:10px;top:16px;width:1px;height:1px;background:#808080;opacity:.5"></div><div class="a" style="left:0px;top:18px;width:1px;height:1px;background:#808080;opacity:.5"></div><div class="a" style="left:1px;top:18px;width:6px;height:1px;background:#569cd6;opacity:.5"></div><div class="a" style="left:8px;top:18px;width:5px;height:1px;background:#9cdcfe;opacity:.5"></div><div class="a" style="left:14px;top:18px;width:4px;height:1px;background:#9cdcfe;opacity:.5"></div><div class="a" style="left:18px;top:18px;width:1px;height:1px;background:#d4d4d4;opacity:.5"></div><div class="a" style="left:19px;top:18px;width:4px;height:1px;background:#ce9178;opacity:.5"></div><div class="a" style="left:23px;top:18px;width:1px;height:1px;background:#808080;opacity:.5"></div><div class="a" style="left:0px;top:20px;width:6px;height:1px;background:#c586c0;opacity:.5"></div><div class="a" style="left:7px;top:20px;width:1px;height:1px;background:#d4d4d4;opacity:.5"></div><div class="a" style="left:9px;top:20px;width:3px;height:1px;background:#4fc1ff;opacity:.5"></div><div class="a" style="left:12px;top:20px;width:1px;height:1px;background:#d4d4d4;opacity:.5"></div><div class="a" style="left:14px;top:20px;width:8px;height:1px;background:#4fc1ff;opacity:.5"></div><div class="a" style="left:23px;top:20px;width:1px;height:1px;background:#d4d4d4;opacity:.5"></div><div class="a" style="left:25px;top:20px;width:4px;height:1px;background:#c586c0;opacity:.5"></div><div class="a" style="left:30px;top:20px;width:5px;height:1px;background:#ce9178;opacity:.5"></div><div class="a" style="left:0px;top:22px;width:5px;height:1px;background:#569cd6;opacity:.5"></div><div class="a" style="left:6px;top:22px;width:8px;height:1px;background:#4fc1ff;opacity:.5"></div><div class="a" style="left:15px;top:22px;width:1px;height:1px;background:#d4d4d4;opacity:.5"></div><div class="a" style="left:17px;top:22px;width:3px;height:1px;background:#dcdcaa;opacity:.5"></div><div class="a" style="left:20px;top:22px;width:1px;height:1px;background:#ffd700;opacity:.5"></div><div class="a" style="left:21px;top:22px;width:17px;height:1px;background:#ce9178;opacity:.5"></div><div class="a" style="left:38px;top:22px;width:1px;height:1px;background:#ffd700;opacity:.5"></div><div class="a" style="left:0px;top:24px;width:5px;height:1px;background:#569cd6;opacity:.5"></div><div class="a" style="left:6px;top:24px;width:5px;height:1px;background:#4fc1ff;opacity:.5"></div><div class="a" style="left:12px;top:24px;width:1px;height:1px;background:#d4d4d4;opacity:.5"></div><div class="a" style="left:14px;top:24px;width:3px;height:1px;background:#dcdcaa;opacity:.5"></div><div class="a" style="left:17px;top:24px;width:1px;height:1px;background:#ffd700;opacity:.5"></div><div class="a" style="left:18px;top:24px;width:4px;height:1px;background:#b5cea8;opacity:.5"></div><div class="a" style="left:22px;top:24px;width:1px;height:1px;background:#ffd700;opacity:.5"></div><div class="a" style="left:0px;top:26px;width:5px;height:1px;background:#569cd6;opacity:.5"></div><div class="a" style="left:6px;top:26px;width:7px;height:1px;background:#4fc1ff;opacity:.5"></div><div class="a" style="left:14px;top:26px;width:1px;height:1px;background:#d4d4d4;opacity:.5"></div><div class="a" style="left:16px;top:26px;width:8px;height:1px;background:#dcdcaa;opacity:.5"></div><div class="a" style="left:24px;top:26px;width:1px;height:1px;background:#ffd700;opacity:.5"></div><div class="a" style="left:4px;top:28px;width:2px;height:1px;background:#6a9955;opacity:.5"></div><div class="a" style="left:7px;top:28px;width:18px;height:1px;background:#6a9955;opacity:.5"></div><div class="a" style="left:26px;top:28px;width:4px;height:1px;background:#6a9955;opacity:.5"></div><div class="a" style="left:31px;top:28px;width:1px;height:1px;background:#6a9955;opacity:.5"></div><div class="a" style="left:33px;top:28px;width:11px;height:1px;background:#6a9955;opacity:.5"></div><div class="a" style="left:4px;top:30px;width:1px;height:1px;background:#da70d6;opacity:.5"></div><div class="a" style="left:4px;top:34px;width:3px;height:1px;background:#dcdcaa;opacity:.5"></div><div class="a" style="left:7px;top:34px;width:3px;height:1px;background:#179fff;opacity:.5"></div><div class="a" style="left:8px;top:36px;width:6px;height:1px;background:#c586c0;opacity:.5"></div><div class="a" style="left:15px;top:36px;width:8px;height:1px;background:#4fc1ff;opacity:.5"></div><div class="a" style="left:23px;top:36px;width:6px;height:1px;background:#dcdcaa;opacity:.5"></div><div class="a" style="left:30px;top:36px;width:1px;height:1px;background:#d4d4d4;opacity:.5"></div><div class="a" style="left:31px;top:36px;width:3px;height:1px;background:#ce9178;opacity:.5"></div><div class="a" style="left:35px;top:36px;width:1px;height:1px;background:#d4d4d4;opacity:.5"></div><div class="a" style="left:37px;top:36px;width:5px;height:1px;background:#4fc1ff;opacity:.5"></div><div class="a" style="left:42px;top:36px;width:6px;height:1px;background:#dcdcaa;opacity:.5"></div><div class="a" style="left:4px;top:38px;width:1px;height:1px;background:#179fff;opacity:.5"></div><div class="a" style="left:5px;top:38px;width:1px;height:1px;background:#d4d4d4;opacity:.5"></div><div class="a" style="left:4px;top:40px;width:3px;height:1px;background:#dcdcaa;opacity:.5"></div><div class="a" style="left:7px;top:40px;width:1px;height:1px;background:#179fff;opacity:.5"></div><div class="a" style="left:8px;top:40px;width:8px;height:1px;background:#9cdcfe;opacity:.5"></div><div class="a" style="left:16px;top:40px;width:2px;height:1px;background:#179fff;opacity:.5"></div><div class="a" style="left:8px;top:42px;width:8px;height:1px;background:#4fc1ff;opacity:.5"></div><div class="a" style="left:16px;top:42px;width:6px;height:1px;background:#dcdcaa;opacity:.5"></div><div class="a" style="left:23px;top:42px;width:1px;height:1px;background:#d4d4d4;opacity:.5"></div><div class="a" style="left:25px;top:42px;width:8px;height:1px;background:#9cdcfe;opacity:.5"></div><div class="a" style="left:33px;top:42px;width:6px;height:1px;background:#dcdcaa;opacity:.5"></div><div class="a" style="left:39px;top:42px;width:8px;height:1px;background:#ffd700;opacity:.5"></div><div class="a" style="left:8px;top:44px;width:5px;height:1px;background:#4fc1ff;opacity:.5"></div><div class="a" style="left:13px;top:44px;width:6px;height:1px;background:#dcdcaa;opacity:.5"></div><div class="a" style="left:20px;top:44px;width:1px;height:1px;background:#d4d4d4;opacity:.5"></div><div class="a" style="left:22px;top:44px;width:6px;height:1px;background:#4ec9b0;opacity:.5"></div><div class="a" style="left:28px;top:44px;width:1px;height:1px;background:#ffd700;opacity:.5"></div><div class="a" style="left:29px;top:44px;width:8px;height:1px;background:#9cdcfe;opacity:.5"></div><div class="a" style="left:37px;top:44px;width:6px;height:1px;background:#dcdcaa;opacity:.5"></div><div class="a" style="left:43px;top:44px;width:9px;height:1px;background:#da70d6;opacity:.5"></div><div class="a" style="left:4px;top:46px;width:1px;height:1px;background:#179fff;opacity:.5"></div><div class="a" style="left:0px;top:48px;width:1px;height:1px;background:#da70d6;opacity:.5"></div><div class="a" style="left:0px;top:50px;width:1px;height:1px;background:#ffd700;opacity:.5"></div><div class="a" style="left:0px;top:52px;width:5px;height:1px;background:#569cd6;opacity:.5"></div><div class="a" style="left:6px;top:52px;width:3px;height:1px;background:#dcdcaa;opacity:.5"></div><div class="a" style="left:10px;top:52px;width:1px;height:1px;background:#d4d4d4;opacity:.5"></div><div class="a" style="left:12px;top:52px;width:2px;height:1px;background:#ffd700;opacity:.5"></div><div class="a" style="left:15px;top:52px;width:2px;height:1px;background:#569cd6;opacity:.5"></div><div class="a" style="left:17px;top:52px;width:1px;height:1px;background:#ffd700;opacity:.5"></div><div class="a" style="left:12px;top:54px;width:7px;height:1px;background:#4fc1ff;opacity:.5"></div><div class="a" style="left:19px;top:54px;width:6px;height:1px;background:#9cdcfe;opacity:.5"></div><div class="a" style="left:26px;top:54px;width:1px;height:1px;background:#d4d4d4;opacity:.5"></div><div class="a" style="left:28px;top:54px;width:31px;height:1px;background:#ce9178;opacity:.5"></div><div class="a" style="left:12px;top:56px;width:2px;height:1px;background:#6a9955;opacity:.5"></div><div class="a" style="left:15px;top:56px;width:14px;height:1px;background:#6a9955;opacity:.5"></div><div class="a" style="left:30px;top:56px;width:1px;height:1px;background:#6a9955;opacity:.5"></div><div class="a" style="left:32px;top:56px;width:26px;height:1px;background:#6a9955;opacity:.5"></div><div class="a" style="left:8px;top:58px;width:1px;height:1px;background:#ffd700;opacity:.5"></div><div class="a" style="left:0px;top:60px;width:2px;height:1px;background:#808080;opacity:.5"></div><div class="a" style="left:2px;top:60px;width:6px;height:1px;background:#569cd6;opacity:.5"></div><div class="a" style="left:8px;top:60px;width:1px;height:1px;background:#808080;opacity:.5"></div><div class="a" style="left:0px;top:62px;width:1px;height:1px;background:#808080;opacity:.5"></div><div class="a" style="left:1px;top:62px;width:5px;height:1px;background:#569cd6;opacity:.5"></div><div class="a" style="left:7px;top:62px;width:6px;height:1px;background:#9cdcfe;opacity:.5"></div><div class="a" style="left:13px;top:62px;width:1px;height:1px;background:#808080;opacity:.5"></div><div class="a" style="left:0px;top:64px;width:2px;height:1px;background:#808080;opacity:.5"></div><div class="a" style="left:2px;top:64px;width:5px;height:1px;background:#569cd6;opacity:.5"></div><div class="a" style="left:7px;top:64px;width:1px;height:1px;background:#808080;opacity:.5"></div></div>
<div class="a" style="left:1558px;top:22px;width:1px;height:625px;background:#121212"></div>
<div class="a" style="left:1559px;top:134px;width:13px;height:231px;background:#424242"></div>
<div class="a" style="left:1563px;top:203px;width:6px;height:3px;background:#b0b0b0"></div>
<div class="a" style="left:1565px;top:205px;width:3px;height:9px;background:#b0b0b0"></div>
<div class="a" style="left:1564px;top:310px;width:4px;height:9px;background:#8c8c8c"></div>
</div>
<div id="panel" class="a">
<div class="t" style="left:20px;top:10px;font-size:11px;transform-origin:0 0;transform:scaleX(0.867);color:#9d9d9d">PROBLEMS</div>
<div class="t" style="left:98px;top:10px;font-size:11px;transform-origin:0 0;transform:scaleX(0.912);color:#9d9d9d">OUTPUT</div>
<div class="t" style="left:163px;top:10px;font-size:11px;transform-origin:0 0;transform:scaleX(0.885);color:#9d9d9d">DEBUG CONSOLE</div>
<div class="t" style="left:272px;top:10px;font-size:11px;transform-origin:0 0;transform:scaleX(0.926);color:#e7e7e7">TERMINAL</div>
<div class="t" style="left:348px;top:10px;font-size:11px;transform-origin:0 0;transform:scaleX(0.835);color:#9d9d9d">PORTS</div>
<div class="a" style="left:270px;top:28px;width:56px;height:1px;background:#0078d4"></div>
<svg class="a" style="left:1342px;top:10px" width="16" height="16" viewBox="0 0 16 16"><path d="M3 2.5h11.500l-1.500 11H1.500z" stroke="#cccccc" stroke-width="1.1" fill="none"/><path d="M4.500 6l2.500 2-2.500 2M8 10.500h3" stroke="#cccccc" stroke-width="1.1" fill="none"/></svg>
<div class="t" style="left:1362px;top:10px;font-size:12.2px;transform-origin:0 0;transform:scaleX(0.893);color:#cccccc">esbuild</div>
<svg class="a" style="left:1404px;top:10px" width="16" height="16" viewBox="0 0 16 16"><path d="M8 1.500v13M1.500 8h13" stroke="#cccccc" stroke-width="1.1"/></svg>
<svg class="a" style="left:1422px;top:10px" width="12" height="16" viewBox="0 0 12 16"><path d="M2.500 6l3.500 3.500L9.500 6" stroke="#cccccc" stroke-width="1" fill="none"/></svg>
<svg class="a" style="left:1442px;top:10px" width="16" height="16" viewBox="0 0 16 16"><rect x="1.500" y="1.500" width="13" height="13" rx="1" stroke="#cccccc" stroke-width="1.1" fill="none"/><path d="M8 2v12" stroke="#cccccc" stroke-width="1.1"/></svg>
<svg class="a" style="left:1465px;top:10px" width="16" height="16" viewBox="0 0 16 16"><path d="M3 4h10M6 2.500h4M4 4l.8 10.500h6.400L12 4M6.500 6.500v6M9.500 6.500v6M8 6.500v6" stroke="#c8a2c8" stroke-width="1.1" fill="none"/></svg>
<svg class="a" style="left:1490px;top:10px" width="16" height="16" viewBox="0 0 16 16"><circle cx="3" cy="8" r="1.1" fill="#cccccc"/><circle cx="8" cy="8" r="1.1" fill="#cccccc"/><circle cx="13" cy="8" r="1.1" fill="#cccccc"/></svg>
<svg class="a" style="left:1515px;top:10px" width="16" height="16" viewBox="0 0 16 16"><path d="M3 10.500l5-5 5 5" stroke="#cccccc" stroke-width="1.1" fill="none"/></svg>
<svg class="a" style="left:1541px;top:10px" width="16" height="16" viewBox="0 0 16 16"><path d="M3 3l10 10M13 3L3 13" stroke="#cccccc" stroke-width="1.2"/></svg>
<div class="t" style="left:20px;top:45px;font-family:'Liberation Mono',monospace;font-size:11.67px;line-height:18px;color:#cccccc;-webkit-text-stroke:0.2px">14:08:43 <span style="color:#29b8db;font-weight:bold">[vite]</span> <span style="color:#8a8a8a">(client)</span> <span style="color:#23d18b">hmr update</span> /src/Vue2_4.vue</div>
<div class="a" style="left:20px;top:63px;width:8px;height:17px;border:1px solid #cccccc"></div>
<div class="a" style="left:1558px;top:45px;width:1px;height:256px;background:#0e0e0e"></div>
<div class="a" style="left:1560px;top:49px;width:4px;height:7px;background:#5a9bd5"></div>
<div class="a" style="left:1560px;top:98px;width:4px;height:7px;background:#6e6e6e"></div>
</div>
<div id="status" class="a">
<div class="a" style="left:0;top:-1px;width:34px;height:22px;background:#0078d4"></div>
<svg class="a" style="left:8px;top:1px" width="18" height="18" viewBox="0 0 18 18"><path d="M4.500 9.300l4.400 2.600-3.800 3.800M13.250 4.300L9.500 8.300l4.400 3" stroke="#ffffff" stroke-width="1.2" fill="none"/></svg>
<svg class="a" style="left:42px;top:3px" width="14" height="14" viewBox="0 0 14 14"><circle cx="7" cy="7" r="5.800" stroke="#cccccc" stroke-width="1.1" fill="none"/><path d="M4.700 4.700l4.600 4.600M9.300 4.700L4.700 9.300" stroke="#cccccc" stroke-width="1.1"/></svg>
<div class="t" style="left:59px;top:3px;font-size:13px;color:#cccccc">0</div>
<svg class="a" style="left:69px;top:2px" width="14" height="14" viewBox="0 0 14 14"><path d="M7 1.500L13 12.500H1z" stroke="#cccccc" stroke-width="1.1" fill="none" stroke-linejoin="round"/><path d="M7 5v4M7 10.300v1" stroke="#cccccc" stroke-width="1.1"/></svg>
<div class="t" style="left:86px;top:3px;font-size:13px;color:#cccccc">0</div>
<div class="t" style="left:1534px;top:3px;font-size:11.6px;color:#cccccc">Ln 16, Col 6</div>
<div class="t" style="left:1612px;top:3px;font-size:11px;color:#cccccc">Spaces: 4</div>
<div class="t" style="left:1677px;top:3px;font-size:11.2px;color:#cccccc">UTF-8</div>
<div class="a" style="left:1734px;top:-1px;width:186px;height:22px;background:#ffffff"></div>
<svg class="a" style="left:1714px;top:-3px" width="30" height="27" viewBox="0 0 30 27"><path d="M4 3l22-3 3 21-23 6z" fill="#e8501f"/><path d="M20 6.500c-2-1-6-1.500-8.500-.500-2.500 1-2.500 3.500 0 4.300 2.500.800 6 .800 7.500 2.300 1.500 1.500 0 4-3 4.500-2.500.400-5.500-.300-7.500-1.300" stroke="#ffffff" stroke-width="3" fill="none" stroke-linecap="round"/></svg>
<div class="t" style="left:1746px;top:2px;font-size:15px;font-weight:bold;color:#1a73c8;font-family:'Liberation Sans',sans-serif">英</div>
<div class="a" style="left:1773px;top:7px;width:3px;height:3px;border-radius:2px;background:#1a73c8"></div>
<div class="t" style="left:1776px;top:1px;font-size:14px;font-weight:bold;color:#1a73c8">,</div>
<svg class="a" style="left:1790px;top:2px" width="18" height="18" viewBox="0 0 18 18"><circle cx="9" cy="9" r="7.500" stroke="#1a73c8" stroke-width="1.600" fill="none"/><circle cx="6.500" cy="7" r="1.100" fill="#1a73c8"/><circle cx="11.500" cy="7" r="1.100" fill="#1a73c8"/><path d="M5.500 10.500c1.500 2.500 5.500 2.500 7 0" stroke="#1a73c8" stroke-width="1.400" fill="none"/></svg>
<svg class="a" style="left:1813px;top:2px" width="14" height="18" viewBox="0 0 14 18"><rect x="4" y="1" width="6" height="10" rx="3" fill="#1a73c8"/><path d="M2 8c0 3 2 5 5 5s5-2 5-5M7 13v3.500M4 16.500h6" stroke="#1a73c8" stroke-width="1.500" fill="none"/></svg>
<svg class="a" style="left:1833px;top:3px" width="20" height="16" viewBox="0 0 20 16"><rect x="1" y="2" width="18" height="12" rx="1.500" fill="#1a73c8"/><path d="M4 5.500h1.500M7 5.500h1.500M10 5.500h1.500M13 5.500h1.500M4 8.500h1.500M7 8.500h1.500M10 8.500h1.500M13 8.500h1.500M6 11.500h8" stroke="#ffffff" stroke-width="1.200"/></svg>
<svg class="a" style="left:1857px;top:2px" width="18" height="18" viewBox="0 0 18 18"><circle cx="8" cy="5" r="3.300" fill="#b9bec6"/><path d="M2 15c0-4 2.500-6 6-6s6 2 6 6z" fill="#b9bec6"/><rect x="11" y="11" width="5" height="6" fill="#e8e8e8" stroke="#9aa0a8" stroke-width="0.8"/></svg>
<svg class="a" style="left:1877px;top:2px" width="18" height="18" viewBox="0 0 18 18"><path d="M6 1.500L1 4.500l2 4 2-1V16h8V7.500l2 1 2-4-5-3c-.500 1.500-1.500 2.200-3 2.200S6.500 3 6 1.500z" fill="#1a73c8"/></svg>
<svg class="a" style="left:1900px;top:2px" width="18" height="18" viewBox="0 0 18 18"><rect x="1" y="1" width="7" height="7" fill="#1a73c8"/><rect x="10" y="1" width="7" height="7" fill="#1a73c8"/><rect x="1" y="10" width="7" height="7" fill="#1a73c8"/><rect x="10" y="10" width="7" height="7" fill="#1a73c8"/></svg>
</div>
<div id="taskbar" class="a">
<svg class="a" style="left:15px;top:11px" width="18" height="18" viewBox="0 0 18 18"><path d="M0 2.500L7.300 1.500v7H0zM8.300 1.300L18 0v8.500H8.300zM0 9.500h7.300v7L0 15.500zM8.300 9.500H18V18l-9.700-1.300z" fill="#ffffff"/></svg>
<div class="a" style="left:51px;top:0;width:159px;height:40px;background:#4f6069"></div>
<div class="a" style="left:51px;top:37px;width:159px;height:3px;background:#76b9ed"></div>
<div class="t" style="left:89px;top:11px;font-size:12.3px;line-height:18px;color:#ffffff">Vue2_5.vue - cha...</div>
<div class="a" style="left:216px;top:37px;width:152px;height:3px;background:#76b9ed"></div>
<div class="t" style="left:250px;top:11px;font-size:13.3px;line-height:18px;color:#ffffff">Vite App - Googl...</div>
<div class="a" style="left:377px;top:37px;width:151px;height:3px;background:#76b9ed"></div>
<div class="t" style="left:410px;top:11px;font-size:12.6px;line-height:18px;color:#ffffff">src</div>
<div class="a" style="left:538px;top:37px;width:152px;height:3px;background:#76b9ed"></div>
<div class="t" style="left:572px;top:11px;font-size:12.2px;line-height:18px;color:#ffffff">vuejs3.x-第2章Vue...</div>
<div class="a" style="left:698px;top:37px;width:152px;height:3px;background:#76b9ed"></div>
<div class="t" style="left:732px;top:11px;font-size:12.5px;line-height:18px;color:#ffffff">V4.4.1 - PowerPoi...</div>
<svg class="a" style="left:61px;top:10px" width="24" height="24" viewBox="0 0 100 100"><path fill="#0065a9" d="M96.500 10.800L75.900.900c-2.400-1.200-5.300-.700-7.100 1.200L29.400 38.100 12.200 25.100c-1.600-1.200-3.800-1.100-5.300.200L1.400 30.300c-1.800 1.700-1.800 4.500 0 6.200L16.300 50 1.400 63.500c-1.800 1.700-1.800 4.500 0 6.200l5.500 5c1.500 1.400 3.700 1.500 5.300.200l17.200-13L68.800 97.900c1.900 1.900 4.700 2.400 7.100 1.200l20.600-9.900c2.200-1 3.500-3.200 3.500-5.600V16.400c0-2.400-1.400-4.600-3.500-5.600zM75 72.700L45.100 50 75 27.300z"/><path fill="#1f9cf0" d="M75.900 99.100c-2.400 1.200-5.300.700-7.100-1.200L1.400 36.500c-1.800-1.700-1.800-4.500 0-6.200l5.500-5c1.500-1.400 3.700-1.500 5.300-.200L93 83.600c2.900 2.300 7 .200 7-3.500v3.500c0 2.400-1.400 4.600-3.500 5.600z" opacity=".8"/></svg>
<svg class="a" style="left:221px;top:8px" width="24" height="24" viewBox="0 0 24 24"><circle cx="12" cy="12" r="11.500" fill="#dd4b39"/><path d="M12 12L2.100 17.700A11.500 11.500 0 0 0 12 23.500z" fill="#1da462"/><path d="M2.100 6.300L12 12 2.100 17.700A11.500 11.500 0 0 1 2.100 6.300z" fill="#1da462"/><path d="M12 12l9.900-5.700A11.500 11.500 0 0 1 12 23.500z" fill="#ffcd46"/><circle cx="12" cy="12" r="5.300" fill="#ffffff"/><circle cx="12" cy="12" r="4.200" fill="#4c8bf5"/></svg>
<svg class="a" style="left:385px;top:10px" width="16" height="22" viewBox="0 0 16 22"><path d="M2 2h8l4 2v16H2z" fill="#f7d774"/><path d="M2 2l6 3v17l-6-2z" fill="#e8c45a"/></svg>
<svg class="a" style="left:544px;top:9px" width="24" height="24" viewBox="0 0 24 24"><path d="M1 3l13-2.500V23.500L1 21z" fill="#d24726"/><rect x="12" y="4" width="11" height="16" fill="#ffffff"/><path d="M15 8h6M15 11h6M15 14h4" stroke="#d24726" stroke-width="1.500"/><text x="7" y="15.500" font-size="10" font-weight="bold" font-family="Liberation Sans" fill="#ffffff" text-anchor="middle">P</text></svg>
<svg class="a" style="left:704px;top:9px" width="24" height="24" viewBox="0 0 24 24"><path d="M1 3l13-2.500V23.500L1 21z" fill="#d24726"/><rect x="12" y="4" width="11" height="16" fill="#ffffff"/><path d="M15 8h6M15 11h6M15 14h4" stroke="#d24726" stroke-width="1.500"/><text x="7" y="15.500" font-size="10" font-weight="bold" font-family="Liberation Sans" fill="#ffffff" text-anchor="middle">P</text></svg>
<svg class="a" style="left:1594px;top:10px" width="18" height="18" viewBox="0 0 18 18"><rect x="1" y="1" width="16" height="16" rx="5" fill="#f5a623"/><circle cx="9" cy="9" r="4.500" fill="none" stroke="#fff3d0" stroke-width="2"/></svg>
<svg class="a" style="left:1666px;top:11px" width="20" height="18" viewBox="0 0 20 18"><rect x="4" y="2.500" width="14" height="10" stroke="#ffffff" stroke-width="1.200" fill="none"/><path d="M11 12.500v3M7 15.500h8M1 3h3M2 3v4" stroke="#ffffff" stroke-width="1.200"/></svg>
<svg class="a" style="left:1715px;top:11px" width="18" height="18" viewBox="0 0 18 18"><rect x="1" y="1" width="15" height="16" fill="#e6e6e6"/><path d="M4 3c4 1 6 4 7 9" stroke="#6a8aa0" stroke-width="1.500" fill="none"/><circle cx="14" cy="14" r="3" fill="#4caf50"/></svg>
<div class="t" style="left:1738px;top:11px;font-size:14px;line-height:18px;color:#ffffff">英</div>
<svg class="a" style="left:1766px;top:10px" width="20" height="20" viewBox="0 0 20 20"><path d="M2 4l15-2.500 2 14L4 19z" fill="#e8501f"/><path d="M13.500 6.500c-1.500-.800-4-1-5.500-.300-1.700.700-1.700 2.300 0 2.900 1.700.500 4 .500 5 1.500 1 1 0 2.700-2 3-1.700.300-3.700-.200-5-.900" stroke="#ffffff" stroke-width="2.200" fill="none" stroke-linecap="round"/></svg>
<div class="t" style="left:1815px;top:3px;font-size:12.3px;line-height:16px;color:#ffffff">14:14</div>
<div class="t" style="left:1801px;top:21px;font-size:13.2px;line-height:16px;color:#ffffff">2025/3/10</div>
<svg class="a" style="left:1877px;top:10px" width="20" height="20" viewBox="0 0 20 20"><path d="M2 3h16v11h-6l-2 2.500L8 14H2z" stroke="#ffffff" stroke-width="1.200" fill="none" stroke-linejoin="round"/></svg>
<div class="a" style="left:1914px;top:0;width:1px;height:40px;background:#5d6b75"></div>
</div>
</body></html>
